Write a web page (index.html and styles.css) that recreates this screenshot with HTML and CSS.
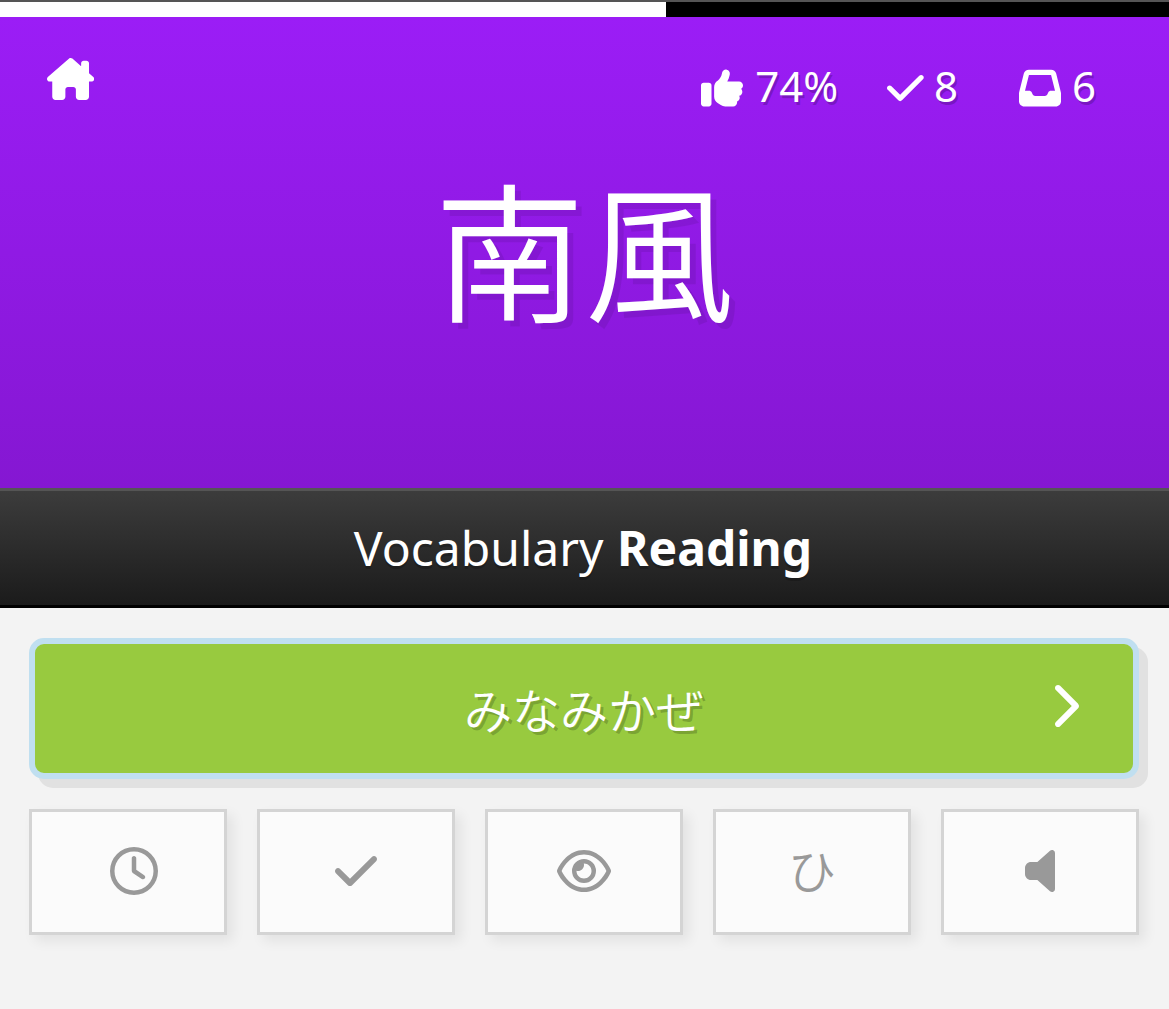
FILE: index.html
```html
<!DOCTYPE html>
<html lang="en">
<head>
    <meta charset="UTF-8">
    <meta name="viewport" content="width=device-width, initial-scale=1.0">
    <title>Reviews</title>
    <link rel="stylesheet" href="styles.css">
</head>
<body>

    <div class="progress">
        <div class="progress-bar" style="width: 57%"></div>
    </div>

    <header class="question">
        <nav class="menu">
            <a class="home" href="#" aria-label="Home">
                <svg class="icon" viewBox="0 0 576 512"><path d="M575.8 255.5c0 18-15 32.1-32 32.1h-32l.7 160.2c0 2.7-.2 5.4-.5 8.1V472c0 22.1-17.9 40-40 40H392c-22.1 0-40-17.9-40-40V384c0-17.7-14.3-32-32-32H256c-17.7 0-32 14.3-32 32v88c0 22.1-17.9 40-40 40H104c-22.1 0-40-17.9-40-40V287.6H32c-18 0-32-14-32-32.1c0-9 3-17 10-24L266.4 8c7-7 15-8 22-8s15 2 21 7L416 100.7V64c0-17.7 14.3-32 32-32h32c17.7 0 32 14.3 32 32V185l52.8 46.4c8 7 12 15 11 24z"/></svg>
            </a>
            <div class="stats">
                <div class="stat">
                    <svg class="icon" viewBox="0 0 512 512"><path d="M313.4 32.9c26 5.2 42.9 30.5 37.7 56.5l-2.3 11.4c-5.3 26.7-15.1 52.1-28.8 75.2H464c26.5 0 48 21.5 48 48c0 18.5-10.5 34.6-25.9 42.6C497 275.4 504 288.9 504 304c0 23.4-16.8 42.9-38.9 47.1c4.4 7.3 6.9 15.8 6.9 24.9c0 21.3-13.9 39.4-33.1 45.6c.7 3.3 1.1 6.8 1.1 10.4c0 26.5-21.5 48-48 48H294.5c-19 0-37.5-5.6-53.3-16.1l-38.5-25.7C176 420.4 160 390.4 160 358.3V247.1c0-29.2 13.3-56.7 36-75l7.4-5.9c26.5-21.2 44.6-51 51.2-84.2l2.3-11.4c5.2-26 30.5-42.9 56.5-37.7zM32 192H96c17.7 0 32 14.3 32 32V448c0 17.7-14.3 32-32 32H32c-17.7 0-32-14.3-32-32V224c0-17.7 14.3-32 32-32z"/></svg>
                    <span>74%</span>
                </div>
                <div class="stat stat-done">
                    <svg class="icon" viewBox="0 0 448 512"><path d="M438.6 105.4c12.5 12.5 12.5 32.8 0 45.3l-256 256c-12.5 12.5-32.8 12.5-45.3 0l-128-128c-12.5-12.5-12.5-32.8 0-45.3s32.8-12.5 45.3 0L160 338.7 393.4 105.4c12.5-12.5 32.8-12.5 45.3 0z"/></svg>
                    <span>8</span>
                </div>
                <div class="stat stat-left">
                    <svg class="icon" viewBox="0 0 512 512"><path d="M121 32C91.6 32 66 52 58.9 80.5L1.9 308.4C.6 313.5 0 318.7 0 323.9V416c0 35.3 28.7 64 64 64H448c35.3 0 64-28.7 64-64V323.9c0-5.2-.6-10.4-1.9-15.5l-57-227.9C446 52 420.4 32 391 32H121zm0 64H391l48 192H387.8c-12.1 0-23.2 6.8-28.6 17.7l-14.3 28.6c-5.4 10.8-16.5 17.7-28.6 17.7H195.8c-12.1 0-23.2-6.8-28.6-17.7l-14.3-28.6c-5.4-10.8-16.5-17.7-28.6-17.7H73L121 96z"/></svg>
                    <span>6</span>
                </div>
            </div>
        </nav>
        <div class="characters" lang="ja">南風</div>
    </header>

    <div class="question-type">
        <h1>Vocabulary <strong>Reading</strong></h1>
    </div>

    <main class="quiz">
        <div class="answer correct">
            <span class="answer-text" lang="ja">みなみかぜ</span>
            <button class="next" aria-label="Next">
                <svg class="icon" viewBox="0 0 320 512"><path d="M310.6 233.4c12.5 12.5 12.5 32.8 0 45.3l-192 192c-12.5 12.5-32.8 12.5-45.3 0s-12.5-32.8 0-45.3L242.7 256 73.4 86.6c-12.5-12.5-12.5-32.8 0-45.3s32.8-12.5 45.3 0l192 192z"/></svg>
            </button>
        </div>

        <div class="actions">
            <button class="action action-last" aria-label="Last items">
                <svg class="icon" viewBox="0 0 512 512"><path d="M464 256A208 208 0 1 1 48 256a208 208 0 1 1 416 0zM0 256a256 256 0 1 0 512 0A256 256 0 1 0 0 256zM232 120V256c0 8 4 15.5 10.7 20l96 64c11 7.4 25.9 4.4 33.3-6.7s4.4-25.9-6.7-33.3L280 243.2V120c0-13.3-10.7-24-24-24s-24 10.7-24 24z"/></svg>
            </button>
            <button class="action" aria-label="Mark correct">
                <svg class="icon" viewBox="0 0 448 512"><path d="M438.6 105.4c12.5 12.5 12.5 32.8 0 45.3l-256 256c-12.5 12.5-32.8 12.5-45.3 0l-128-128c-12.5-12.5-12.5-32.8 0-45.3s32.8-12.5 45.3 0L160 338.7 393.4 105.4c12.5-12.5 32.8-12.5 45.3 0z"/></svg>
            </button>
            <button class="action" aria-label="Item info">
                <svg class="icon" viewBox="0 0 576 512"><path d="M288 80c-65.2 0-118.8 29.6-159.9 67.7C89.6 183.5 63 226 49.4 256c13.6 30 40.2 72.5 78.6 108.3C169.2 402.4 222.8 432 288 432s118.8-29.6 159.9-67.7C486.4 328.5 513 286 526.6 256c-13.6-30-40.2-72.5-78.6-108.3C406.8 109.6 353.2 80 288 80zM95.4 112.6C142.5 68.8 207.2 32 288 32s145.5 36.8 192.6 80.6c46.8 43.5 78.1 95.4 93 131.1c3.3 7.9 3.3 16.7 0 24.6c-14.9 35.7-46.2 87.7-93 131.1C433.5 443.2 368.8 480 288 480s-145.5-36.8-192.6-80.6C48.6 356 17.3 304 2.5 268.3c-3.3-7.9-3.3-16.7 0-24.6C17.3 208 48.6 156 95.4 112.6zM288 336c44.2 0 80-35.8 80-80s-35.8-80-80-80c-.7 0-1.3 0-2 0c1.3 5.1 2 10.5 2 16c0 35.3-28.7 64-64 64c-5.5 0-10.9-.7-16-2c0 .7 0 1.3 0 2c0 44.2 35.8 80 80 80zm0-208a128 128 0 1 1 0 256 128 128 0 1 1 0-256z"/></svg>
            </button>
            <button class="action" lang="ja">ひ</button>
            <button class="action" aria-label="Play audio">
                <svg class="icon" viewBox="0 0 320 512"><path d="M320 64c0-12.6-7.4-24-18.9-29.2s-25-3.1-34.4 5.3L131.8 160H64c-35.3 0-64 28.7-64 64v64c0 35.3 28.7 64 64 64h67.8L266.7 471.9c9.4 8.4 22.9 10.4 34.4 5.3S320 460.6 320 448V64z"/></svg>
            </button>
        </div>
    </main>

</body>
</html>
```
FILE: styles.css
```css
* {
    box-sizing: border-box;
}

body {
    margin: 0;
    min-height: 100vh;
    font-family: 'Noto Sans', 'Noto Sans CJK JP', sans-serif;
    background-color: #f3f3f3;
    color: #fff;
}

button {
    margin: 0;
    padding: 0;
    font-family: inherit;
    cursor: pointer;
}

.icon {
    display: block;
    height: 1em;
    fill: currentColor;
}

/* progress */
.progress {
    height: 17px;
    border-top: 2px solid #555;
    background-color: #000;
}

.progress-bar {
    height: 100%;
    background-color: #fff;
}

/* question */
.question {
    height: 471px;
    background-image: linear-gradient(to bottom, #9b1df6, #8517d2);
}

.menu {
    display: flex;
    justify-content: space-between;
    align-items: flex-start;
    padding: 41px 73px 0 47px;
    height: 131px;
    font-size: 42px;
}

.home {
    color: #fff;
}

.stats {
    display: flex;
    line-height: 58px;
}

.stat {
    display: flex;
    align-items: center;
    gap: 12px;
    height: 59px;
    text-shadow: 2px 3px 0 rgba(0, 0, 0, 0.2);
}

.stat span {
    padding-bottom: 3px;
}

.stat-done {
    margin-left: 49px;
    gap: 10px;
}

.stat-left {
    margin-left: 61px;
    gap: 11px;
}

.characters {
    font-family: 'Noto Sans CJK JP', sans-serif;
    font-size: 150px;
    font-weight: 350;
    line-height: 196px;
    text-align: center;
    text-shadow: 6px 6px 0 rgba(0, 0, 0, 0.08);
}

.question-type {
    height: 120px;
    border-top: 3px solid #555;
    border-bottom: 3px solid #000;
    background-image: linear-gradient(to bottom, #3c3c3c, #1b1b1b);
    text-align: center;
    text-shadow: 0 3px 0 rgba(0, 0, 0, 0.2);
}

.question-type h1 {
    margin: 0;
    padding-right: 3px;
    font-size: 48px;
    font-weight: 400;
    line-height: 114px;
    word-spacing: 1px;
}

/* answer */
.quiz {
    padding: 30px 30px 0 29px;
}

.answer {
    position: relative;
    height: 141px;
    border: 6px solid #c0dff0;
    border-radius: 15px;
    box-shadow: 9px 9px 0 #e1e1e1;
    text-align: center;
}

.correct {
    background-color: #98ca3f;
}

.answer-text {
    font-family: 'Noto Sans CJK JP', sans-serif;
    font-size: 48px;
    font-weight: 350;
    line-height: 129px;
    text-shadow: 3px 3px 0 rgba(0, 0, 0, 0.2);
}

.next {
    position: absolute;
    top: 38px;
    right: 54px;
    border: none;
    background: none;
    color: #fff;
    font-size: 48px;
}

.actions {
    display: grid;
    grid-template-columns: repeat(5, 1fr);
    gap: 30px;
    margin-top: 30px;
}

.action {
    display: flex;
    justify-content: center;
    align-items: center;
    height: 126px;
    padding-bottom: 2px;
    border: 3px solid #d4d4d4;
    background-color: #fbfbfb;
    box-shadow: 6px 6px 12px rgba(0, 0, 0, 0.07);
    color: #999;
    font-size: 48px;
}

.action:lang(ja) {
    padding-bottom: 9px;
    font-family: 'Noto Sans CJK JP', sans-serif;
    font-weight: 350;
}

.action-last {
    padding-left: 12px;
}
```
